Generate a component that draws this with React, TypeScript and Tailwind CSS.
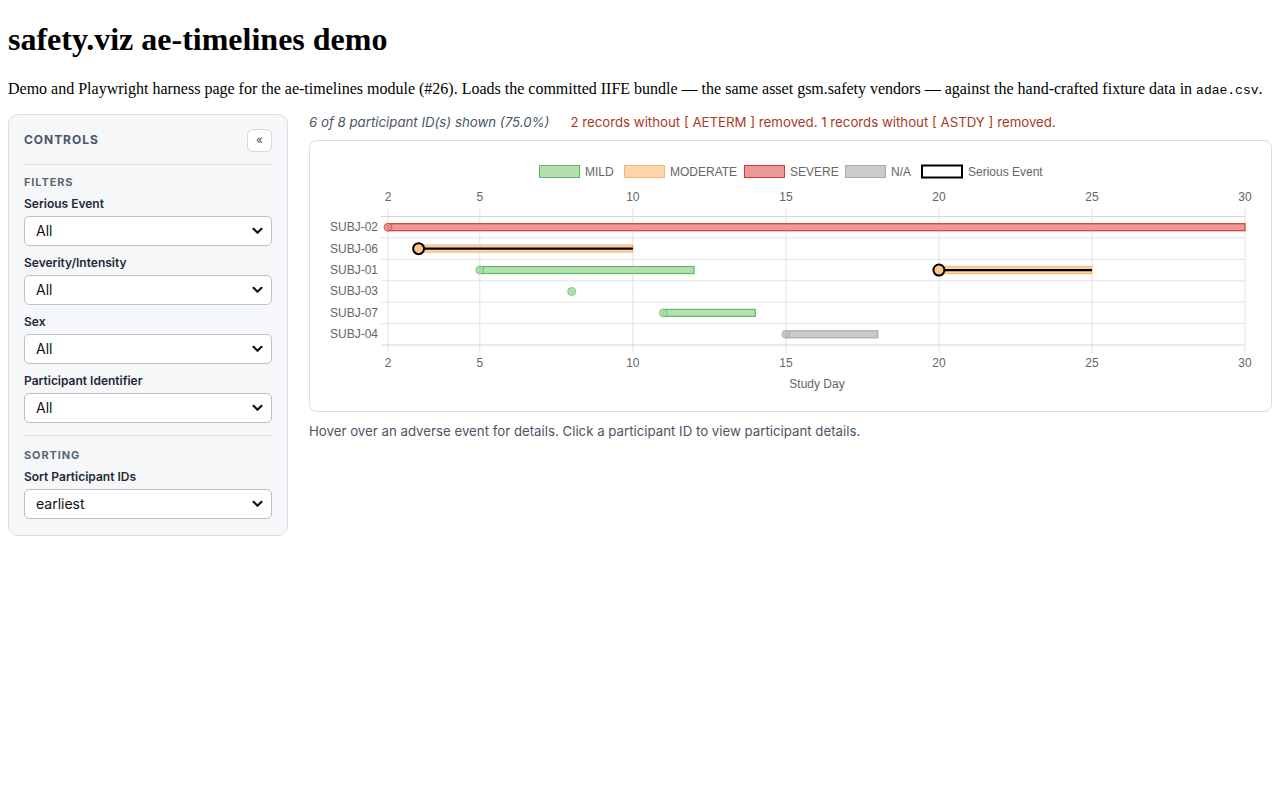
import React from "react";

type Sev = "MILD" | "MODERATE" | "SEVERE" | "N/A";

const COLORS: Record<Sev, { fill: string; stroke: string; dot: string }> = {
  MILD: { fill: "#b3dfb1", stroke: "#5fbb62", dot: "#a6d9a6" },
  MODERATE: { fill: "#fdd5ab", stroke: "#f9b872", dot: "#fcc58c" },
  SEVERE: { fill: "#eb9997", stroke: "#d93834", dot: "#e98885" },
  "N/A": { fill: "#cbcbcb", stroke: "#a9a9a9", dot: "#bdbdbd" },
};

const participants = ["SUBJ-02", "SUBJ-06", "SUBJ-01", "SUBJ-03", "SUBJ-07", "SUBJ-04"];

type Ev = { row: number; sev: Sev; start: number; end: number | null; serious?: boolean };

const events: Ev[] = [
  { row: 0, sev: "SEVERE", start: 2, end: 30 },
  { row: 1, sev: "MODERATE", start: 3, end: 10, serious: true },
  { row: 2, sev: "MILD", start: 5, end: 12 },
  { row: 2, sev: "MODERATE", start: 20, end: 25, serious: true },
  { row: 3, sev: "MILD", start: 8, end: null },
  { row: 4, sev: "MILD", start: 11, end: 14 },
  { row: 5, sev: "N/A", start: 15, end: 18 },
];

const ticks = [2, 5, 10, 15, 20, 25, 30];

const X0 = 78;
const X1 = 935;
const Y0 = 75.5;
const Y1 = 204;
const ROW = (Y1 - Y0) / participants.length;
const xs = (d: number) => X0 + ((d - 2) / 28) * (X1 - X0);
const yc = (r: number) => Y0 + ROW * (r + 0.5);

const legend: { label: string; box: number; text: number; fill: string; stroke: string; sw: number }[] = [
  { label: "MILD", box: 229.5, text: 275, fill: COLORS.MILD.fill, stroke: COLORS.MILD.stroke, sw: 1 },
  { label: "MODERATE", box: 314.5, text: 360, fill: COLORS.MODERATE.fill, stroke: COLORS.MODERATE.stroke, sw: 1 },
  { label: "SEVERE", box: 434.5, text: 480, fill: COLORS.SEVERE.fill, stroke: COLORS.SEVERE.stroke, sw: 1 },
  { label: "N/A", box: 535.5, text: 581, fill: COLORS["N/A"].fill, stroke: COLORS["N/A"].stroke, sw: 1 },
  { label: "Serious Event", box: 612, text: 658, fill: "#ffffff", stroke: "#000000", sw: 2 },
];

function Timeline() {
  const font = "'Liberation Sans', Arial, sans-serif";
  return (
    <svg viewBox="0 0 961 270" className="block w-full h-[270px]" style={{ fontFamily: font }}>
      {/* legend */}
      {legend.map((l) => (
        <g key={l.label}>
          <rect x={l.box} y={24.5} width={40} height={12} fill={l.fill} stroke={l.stroke} strokeWidth={l.sw} />
          <text x={l.text} y={30.5} fontSize={12} fill="#666" dominantBaseline="central">
            {l.label}
          </text>
        </g>
      ))}

      {/* vertical grid + ticks */}
      {ticks.map((t) => (
        <g key={t}>
          <line x1={xs(t)} x2={xs(t)} y1={67} y2={212} stroke="#e3e3e3" strokeWidth={1} />
          <text x={xs(t)} y={56} fontSize={12} fill="#666" textAnchor="middle" dominantBaseline="central">
            {t}
          </text>
          <text x={xs(t)} y={222} fontSize={12} fill="#666" textAnchor="middle" dominantBaseline="central">
            {t}
          </text>
        </g>
      ))}

      {/* horizontal grid */}
      {Array.from({ length: participants.length + 1 }).map((_, i) => (
        <line
          key={i}
          x1={71}
          x2={X1}
          y1={Y0 + ROW * i}
          y2={Y0 + ROW * i}
          stroke={i === 0 || i === participants.length ? "#d4d4d4" : "#e3e3e3"}
          strokeWidth={1}
        />
      ))}

      {/* participant labels */}
      {participants.map((p, i) => (
        <text key={p} x={68} y={yc(i)} fontSize={12} fill="#666" textAnchor="end" dominantBaseline="central">
          {p}
        </text>
      ))}

      {/* events */}
      {events.map((e, i) => {
        const c = COLORS[e.sev];
        const cy = yc(e.row);
        const x = xs(e.start);
        return (
          <g key={i}>
            {e.end !== null && (
              <rect
                x={x}
                y={cy - 3.5}
                width={xs(e.end) - x}
                height={7}
                fill={c.fill}
                stroke={c.stroke}
                strokeWidth={1.2}
              />
            )}
            {e.serious && e.end !== null && (
              <line x1={x} x2={xs(e.end)} y1={cy} y2={cy} stroke="#000" strokeWidth={2.2} />
            )}
            {e.serious ? (
              <circle cx={x} cy={cy} r={5.5} fill={c.dot} stroke="#000" strokeWidth={2} />
            ) : (
              <circle cx={x} cy={cy} r={4} fill={c.dot} fillOpacity={0.85} stroke={c.stroke} strokeOpacity={0.7} strokeWidth={1} />
            )}
          </g>
        );
      })}

      <text x={507} y={243} fontSize={12} fill="#666" textAnchor="middle" dominantBaseline="central">
        Study Day
      </text>
    </svg>
  );
}

function Chevron() {
  return (
    <svg width="11" height="8" viewBox="0 0 11 8" className="pointer-events-none absolute right-[9px] top-1/2 -translate-y-1/2">
      <path d="M1.5 1.8 L5.5 5.8 L9.5 1.8" fill="none" stroke="#111" strokeWidth="2.2" strokeLinecap="round" strokeLinejoin="round" />
    </svg>
  );
}

function Field({ label, value, last }: { label: string; value: string; last?: boolean }) {
  return (
    <div className={last ? "" : "mb-2"}>
      <div className="text-[12px] leading-4 font-semibold text-[#1f2937] mb-[5px] translate-y-px">{label}</div>
      <div className="relative">
        <select
          defaultValue={value}
          className="appearance-none w-full h-[30px] rounded-[5px] border border-[#b9c2cd] bg-white pl-[11px] pr-6 text-[14px] text-[#111] font-['Inter',sans-serif]"
        >
          <option>{value}</option>
        </select>
        <Chevron />
      </div>
    </div>
  );
}

export default function App() {
  return (
    <div className="px-2 bg-white min-h-[800px] text-black">
      <h1 className="my-[21.44px] text-[32px] font-bold leading-[normal] font-['Liberation_Serif',serif]">
        safety.viz ae-timelines demo
      </h1>
      <p className="mt-4 mb-4 text-[16px] leading-[normal] font-['Liberation_Serif',serif]">
        Demo and Playwright harness page for the ae-timelines module (#26). Loads the committed IIFE bundle — the same
        asset gsm.safety vendors — against the hand-crafted fixture data in{" "}
        <code className="font-['Liberation_Mono',monospace] text-[13px]">adae.csv</code>.
      </p>

      <div className="flex items-start gap-[21px] font-['Inter',sans-serif]">
        <aside className="w-[280px] shrink-0 rounded-[10px] border border-[#d9dee4] bg-[#f6f7f9] px-[15px] pt-[14px] pb-[16px]">
          <div className="flex items-center justify-between border-b border-[#dde2e8] pb-3">
            <span className="text-[12px] font-bold tracking-[0.08em] text-[#4a5565]">CONTROLS</span>
            <button className="flex h-[23px] w-[25px] items-center justify-center rounded-[6px] border border-[#d3d9e0] bg-white text-[12px] leading-none text-[#555]">
              «
            </button>
          </div>

          <div className="mt-[9px] border-b border-[#dde2e8] pb-3">
            <div className="text-[11px] leading-4 font-bold tracking-[0.08em] text-[#5a6675] mb-[5px]">FILTERS</div>
            <Field label="Serious Event" value="All" />
            <Field label="Severity/Intensity" value="All" />
            <Field label="Sex" value="All" />
            <Field label="Participant Identifier" value="All" last />
          </div>

          <div className="mt-[11px]">
            <div className="text-[11px] leading-4 font-bold tracking-[0.08em] text-[#5a6675] mb-[5px]">SORTING</div>
            <Field label="Sort Participant IDs" value="earliest" last />
          </div>
        </aside>

        <main className="min-w-0 flex-1">
          <div className="flex items-center gap-[21px] text-[13.25px] leading-4">
            <span className="italic text-[#4a5565]">6 of 8 participant ID(s) shown (75.0%)</span>
            <span className="text-[#a83a1e]">
              2 records without [ AETERM ] removed. 1 records without [ ASTDY ] removed.
            </span>
          </div>
          <div className="mt-[10px] rounded-[8px] border border-[#d9dee4] bg-white">
            <Timeline />
          </div>
          <div className="mt-[11px] text-[13.25px] leading-4 text-[#4a5565]">
            Hover over an adverse event for details. Click a participant ID to view participant details.
          </div>
        </main>
      </div>
    </div>
  );
}
